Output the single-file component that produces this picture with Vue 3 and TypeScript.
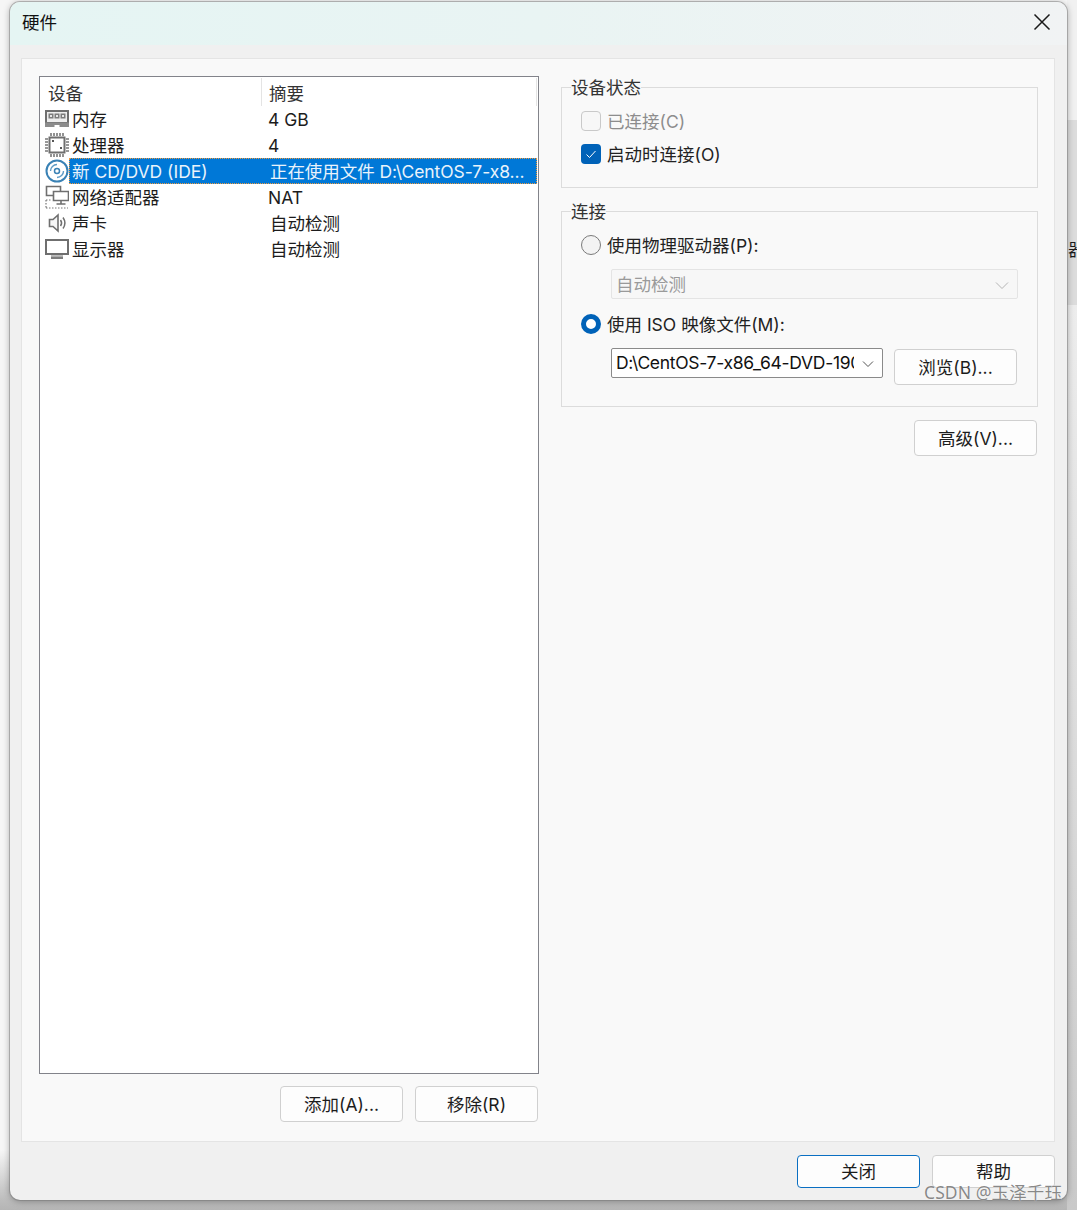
<script setup lang="ts">
interface Row { name: string; summary: string; icon: string; selected?: boolean; latin?: boolean }
const rows: Row[] = [
  { name: '内存', summary: '4 GB', icon: 'ram', latin: true },
  { name: '处理器', summary: '4', icon: 'cpu', latin: true },
  { name: '新 CD/DVD (IDE)', summary: '正在使用文件 D:\\CentOS-7-x8...', icon: 'cd', selected: true },
  { name: '网络适配器', summary: 'NAT', icon: 'net', latin: true },
  { name: '声卡', summary: '自动检测', icon: 'sound' },
  { name: '显示器', summary: '自动检测', icon: 'display' },
]
</script>

<template>
  <div class="page">
    <div class="side-strip"><span class="strip-glyph">器</span></div>
    <div class="window">
      <header class="titlebar">
        <span class="title">硬件</span>
        <svg class="close" width="18" height="18" viewBox="0 0 18 18"><path d="M1.500 1.500 16.500 16.500M16.500 1.500 1.500 16.500" stroke="#1a1a1a" stroke-width="1.500" fill="none" /></svg>
      </header>
      <main class="panel">
        <section class="left">
          <div class="list">
            <div class="list-head">
              <span class="head-a">设备</span>
              <span class="head-b">摘要</span>
            </div>
            <div v-for="r in rows" :key="r.name" class="row">
              <span class="icon">
                <svg v-if="r.icon === 'ram'" width="24" height="18" viewBox="0 0 24 18">
                  <path d="M1 1h22v12H1z" fill="#eeeeee" stroke="#6f6f6f" stroke-width="2" />
                  <path d="M3.500 3.500h5v5h-5zM9.500 3.500h5v5h-5zM15.500 3.500h5v5h-5z" fill="#7d7d7d" />
                  <path d="M5 5h2v2H5zM11 5h2v2h-2zM17 5h2v2h-2z" fill="#e8e8e8" />
                  <path d="M0 12.500h24V17H14.500v-2h-5v2H0z" fill="#8c8c8c" />
                </svg>
                <svg v-else-if="r.icon === 'cpu'" width="24" height="24" viewBox="0 0 24 24">
                  <path d="M4.500 4.500h15v15h-15z" fill="#fff" stroke="#6f6f6f" stroke-width="2" />
                  <path d="M6 0v3M9 0v3M12 0v3M15 0v3M18 0v3M6 21v3M9 21v3M12 21v3M15 21v3M18 21v3M0 6h3M0 9h3M0 12h3M0 15h3M0 18h3M21 6h3M21 9h3M21 12h3M21 15h3M21 18h3" stroke="#777" stroke-width="1.600" fill="none" />
                  <path d="M7 7h2v2H7zM15 14h2v2h-2z" fill="#555" />
                </svg>
                <svg v-else-if="r.icon === 'cd'" width="24" height="24" viewBox="0 0 24 24">
                  <circle cx="12" cy="12" r="10.500" fill="#fff" stroke="#3a82b5" stroke-width="2" />
                  <circle cx="12" cy="12" r="2.500" fill="#fff" stroke="#3a82b5" stroke-width="1.500" />
                  <path d="M5.500 12A6.500 6.500 0 0 1 12 5.500M18.500 12A6.500 6.500 0 0 1 12 18.500" stroke="#5f9cc6" stroke-width="1.400" fill="none" />
                </svg>
                <svg v-else-if="r.icon === 'net'" width="24" height="24" viewBox="0 0 24 24">
                  <path d="M1.500 1.500h14v9h-14z" fill="#fff" stroke="#6f6f6f" stroke-width="1.600" />
                  <path d="M8.500 6.500h15v9h-15z" fill="#fff" stroke="#6f6f6f" stroke-width="1.600" />
                  <path d="M16 15.500v3M11.500 19h9" stroke="#6f6f6f" stroke-width="1.600" fill="none" />
                  <path d="M1 15h5M1 23h22M1 15v8" stroke="#777" stroke-width="1.200" stroke-dasharray="1.500 1.500" fill="none" />
                </svg>
                <svg v-else-if="r.icon === 'sound'" width="24" height="20" viewBox="0 0 24 20">
                  <path d="M4.500 6.500h3.500l5-4.500v16l-5-4.500H4.500z" fill="#f6f6f6" stroke="#6f6f6f" stroke-width="1.600" />
                  <path d="M15.500 7c1.300 1.800 1.300 4.200 0 6M18 4.500c2.300 3.300 2.300 7.700 0 11" stroke="#6f6f6f" stroke-width="1.500" fill="none" />
                </svg>
                <svg v-else width="24" height="20" viewBox="0 0 24 20">
                  <path d="M1 1h22v14H1z" fill="#fff" stroke="#6f6f6f" stroke-width="2" />
                  <path d="M6 16h12v1.500H6z" fill="#bdbdbd" />
                  <path d="M6 17.500h12V20H6z" fill="#7d7d7d" />
                </svg>
              </span>
              <div class="cells" :class="{ selected: r.selected }">
                <span class="cell-name">{{ r.name }}</span>
                <span class="cell-summary" :class="{ latin: r.latin }">{{ r.summary }}</span>
              </div>
            </div>
          </div>
          <div class="left-actions">
            <button class="btn">添加(A)...</button>
            <button class="btn">移除(R)</button>
          </div>
        </section>

        <section class="right">
          <div class="group status">
            <span class="legend">设备状态</span>
            <div class="opt disabled">
              <span class="check off"></span>
              <span class="opt-label">已连接(C)</span>
            </div>
            <div class="opt">
              <span class="check on">
                <svg width="12" height="12" viewBox="0 0 12 12"><path d="M1.500 6.500 4.500 9.500 10.500 3" stroke="#fff" stroke-width="1" fill="none" /></svg>
              </span>
              <span class="opt-label">启动时连接(O)</span>
            </div>
          </div>

          <div class="group conn">
            <span class="legend">连接</span>
            <div class="opt">
              <span class="radio"></span>
              <span class="opt-label">使用物理驱动器(P):</span>
            </div>
            <div class="select disabled-select">
              <span class="select-text">自动检测</span>
              <svg class="chev" width="14" height="9" viewBox="0 0 14 9"><path d="M1 1.500 7 7.500 13 1.500" stroke="#b5b5b5" stroke-width="1" fill="none" /></svg>
            </div>
            <div class="opt opt-iso">
              <span class="radio picked"></span>
              <span class="opt-label">使用 ISO 映像文件(M):</span>
            </div>
            <div class="iso-line">
              <div class="select combo">
                <span class="select-text">D:\CentOS-7-x86_64-DVD-1908.iso</span>
                <svg class="chev" width="12" height="8" viewBox="0 0 12 8"><path d="M1 1.500 6 6.500 11 1.500" stroke="#555" stroke-width="1" fill="none" /></svg>
              </div>
              <button class="btn browse">浏览(B)...</button>
            </div>
          </div>

          <div class="adv-line">
            <button class="btn">高级(V)...</button>
          </div>
        </section>
      </main>
      <footer class="footer">
        <button class="btn primary">关闭</button>
        <button class="btn">帮助</button>
      </footer>
    </div>
    <span class="watermark">CSDN @玉泽千珏</span>
  </div>
</template>

<style>
body { margin: 0; }
</style>

<style scoped>
.page {
  position: relative;
  width: 1077px;
  height: 1210px;
  overflow: hidden;
  background: linear-gradient(#f6f6f6 0, #f6f6f6 1150px, #bdbdbd 1200px, #b5b5b5 100%);
  padding: 2px 0 0 10px;
  box-sizing: border-box;
  font-family: Inter, "Noto Sans CJK SC", sans-serif;
  font-size: 17.5px;
  color: #1c1c1c;
}
.side-strip {
  position: absolute;
  right: 0;
  top: 0;
  bottom: 0;
  width: 10px;
  background: linear-gradient(#f1f1f1 0, #f1f1f1 120px, #dcdcdc 120px, #dcdcdc 305px, #ededed 305px, #c9c9c9 100%);
}
.strip-glyph {
  position: absolute;
  left: 1px;
  top: 238px;
  width: 9px;
  overflow: hidden;
  font-size: 17px;
  line-height: 24px;
}
.window {
  position: relative;
  width: 1057px;
  height: 1198px;
  background: #f0f0f0;
  border-radius: 10px;
  box-shadow: 0 0 0 1px rgba(120, 120, 120, .45), 0 1px 7px rgba(0, 0, 0, .35);
  display: flex;
  flex-direction: column;
  overflow: hidden;
}
.titlebar {
  height: 43px;
  flex: none;
  box-sizing: border-box;
  display: flex;
  align-items: center;
  justify-content: space-between;
  padding: 0 16px 4px 12px;
  background: linear-gradient(90deg, #e5f5f3, #e9f4f3 50%, #f1f3f4);
}
.title {
  font-size: 17.5px;
  color: #111;
}
.close { display: block; }
.panel {
  flex: none;
  margin: 13px 12px 0 11px;
  width: 1034px;
  height: 1084px;
  box-sizing: border-box;
  border: 1px solid #e4e4e4;
  background: #f9f9f9;
  padding: 17px 16px 0 17px;
  display: flex;
  gap: 22px;
}
.left { width: 500px; flex: none; }
.list {
  width: 500px;
  height: 998px;
  box-sizing: border-box;
  border: 1px solid #82838a;
  background: #fff;
}
.list-head {
  display: flex;
  height: 29px;
  align-items: center;
  color: #333;
}
.head-a {
  width: 222px;
  height: 28px;
  line-height: 31px;
  box-sizing: border-box;
  padding-left: 8px;
  border-right: 1px solid #e4e4e4;
  flex: none;
}
.head-b {
  flex: 1;
  margin-right: 1px;
  height: 28px;
  line-height: 31px;
  padding-left: 7px;
  border-right: 1px solid #e4e4e4;
}
.row {
  display: flex;
  height: 26px;
}
.icon {
  width: 29px;
  flex: none;
  display: flex;
  align-items: center;
  padding-left: 5px;
  box-sizing: border-box;
}
.icon svg { display: block; }
.cells {
  flex: 1;
  margin-right: 1px;
  display: flex;
  align-items: center;
  box-sizing: border-box;
  border: 1px solid transparent;
  padding: 2px 0 0 2px;
  line-height: 22px;
}
.cells.selected {
  background: #0078d7;
  color: #e9f3fb;
  border: 1px dotted #ef9a3c;
}
.cell-name { width: 198px; flex: none; white-space: nowrap; }
.cell-summary { white-space: nowrap; }
.cell-summary.latin { margin-left: -2px; }
.selected .cell-summary { letter-spacing: -.07px; }
.left-actions {
  display: flex;
  justify-content: flex-end;
  gap: 12px;
  margin-top: 12px;
  padding-right: 1px;
}
.btn {
  width: 123px;
  height: 36px;
  box-sizing: border-box;
  border: 1px solid #d0d0d0;
  border-radius: 4px;
  background: #fdfdfd;
  font: inherit;
  color: #1c1c1c;
  padding: 2px 0 0;
  line-height: 24px;
}
.right {
  width: 477px;
  flex: none;
  padding-top: 11px;
}
.group {
  position: relative;
  box-sizing: border-box;
  border: 1px solid #dcdcdc;
  padding: 23px 0 0 19px;
}
.status { height: 101px; }
.conn { height: 196px; margin-top: 23px; }
.legend {
  position: absolute;
  left: 9px;
  top: -11px;
  line-height: 22px;
  background: #f9f9f9;
  color: #333;
}
.opt {
  display: flex;
  align-items: center;
  gap: 6px;
  height: 20px;
  line-height: 20px;
  color: #222;
}
.opt + .opt { margin-top: 13px; }
.opt-label { padding-top: 2px; }
.disabled { color: #8d8d8d; }
.check {
  width: 20px;
  height: 20px;
  box-sizing: border-box;
  border-radius: 4px;
  display: flex;
  align-items: center;
  justify-content: center;
  flex: none;
}
.check.off { border: 1px solid #c9c9c9; background: #f7f7f7; }
.check.on { background: #0062b8; }
.radio {
  width: 20px;
  height: 20px;
  box-sizing: border-box;
  border-radius: 50%;
  border: 1px solid #7a7a7a;
  background: #f3f3f3;
  flex: none;
}
.radio.picked {
  border: 5.500px solid #0062b8;
  background: #fff;
}
.select {
  margin-left: 30px;
  height: 30px;
  box-sizing: border-box;
  display: flex;
  align-items: center;
  border-radius: 2px;
  position: relative;
}
.disabled-select {
  width: 407px;
  margin-top: 14px;
  border: 1px solid #e4e4e4;
  background: #f7f7f7;
  color: #9a9a9a;
}
.select-text {
  padding-left: 4px;
  line-height: 26px;
  white-space: nowrap;
  overflow: hidden;
}
.disabled-select .select-text { padding-top: 2px; }
.chev {
  position: absolute;
  right: 8px;
  top: 11px;
}
.opt-iso { margin-top: 15px; }
.iso-line {
  display: flex;
  align-items: flex-start;
  gap: 11px;
  margin-top: 14px;
}
.combo {
  width: 272px;
  flex: none;
  border: 1px solid #8a8a8a;
  background: #fff;
  color: #111;
}
.combo .select-text {
  width: 238px;
  flex: none;
  letter-spacing: -.3px;
}
.browse { margin-top: 1px; }
.adv-line {
  display: flex;
  justify-content: flex-end;
  margin-top: 13px;
  padding-right: 1px;
}
.footer {
  display: flex;
  justify-content: flex-end;
  gap: 12px;
  padding: 13px 12px 0 0;
}
.footer .btn { height: 33px; padding: 0; }
.primary { border-color: #0a6fc2; }
.watermark {
  position: absolute;
  right: 15px;
  top: 1181px;
  font-family: "Noto Sans", "Noto Sans CJK SC", sans-serif;
  font-size: 17.5px;
  line-height: 22px;
  letter-spacing: .1px;
  color: rgba(90, 90, 90, .72);
  text-shadow: 0 0 1px #fff;
  white-space: nowrap;
}
</style>
